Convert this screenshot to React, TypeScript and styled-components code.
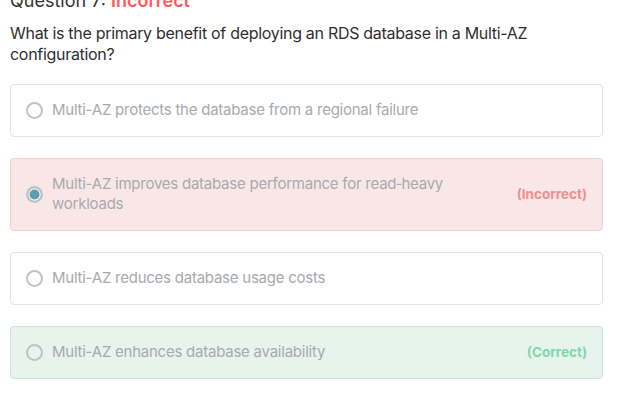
import React from "react";
import styled, { createGlobalStyle } from "styled-components";

type Status = "none" | "incorrect" | "correct";

interface Answer {
  text: string;
  status: Status;
  selected?: boolean;
}

const answers: Answer[] = [
  { text: "Multi-AZ protects the database from a regional failure", status: "none" },
  {
    text: "Multi-AZ improves database performance for read\u2011heavy workloads",
    status: "incorrect",
    selected: true,
  },
  { text: "Multi-AZ reduces database usage costs", status: "none" },
  { text: "Multi-AZ enhances database availability", status: "correct" },
];

const App: React.FC = () => {
  return (
    <>
      <GlobalStyle />
      <Page>
        <Header>
          Question 7: <Verdict>Incorrect</Verdict>
        </Header>
        <QuestionText>
          What is the primary benefit of deploying an RDS database in a Multi-AZ
          configuration?
        </QuestionText>
        <AnswerList>
          {answers.map((a) => (
            <AnswerCard key={a.text} $status={a.status}>
              <Radio $checked={!!a.selected} />
              <AnswerText>{a.text}</AnswerText>
              {a.status !== "none" && (
                <StatusLabel $status={a.status}>
                  {a.status === "correct" ? "(Correct)" : "(Incorrect)"}
                </StatusLabel>
              )}
            </AnswerCard>
          ))}
        </AnswerList>
      </Page>
    </>
  );
};

export default App;

const GlobalStyle = createGlobalStyle`
  body {
    margin: 0;
    background: #fff;
    font-family: Inter, "Noto Sans", sans-serif;
    overflow: hidden;
  }
`;

const Page = styled.div`
  padding: 0 20px 0 10px;
`;

const Header = styled.div`
  font-size: 18px;
  line-height: 22px;
  color: #333;
  margin-top: -10px;
`;

const Verdict = styled.span`
  color: #ff5a5f;
  font-weight: 600;
`;

const QuestionText = styled.p`
  margin: 11px 0 19px;
  font-size: 16px;
  line-height: 21px;
  letter-spacing: -0.3px;
  color: #2f2f2f;
`;

const AnswerList = styled.div`
  display: flex;
  flex-direction: column;
  gap: 21px;
`;

const cardColors: Record<Status, { bg: string; border: string }> = {
  none: { bg: "#ffffff", border: "#e3e3e3" },
  incorrect: { bg: "#f9e7e7", border: "#ecd4d4" },
  correct: { bg: "#e6f4ed", border: "#d0e3d8" },
};

const AnswerCard = styled.div<{ $status: Status }>`
  display: flex;
  align-items: center;
  gap: 9px;
  padding: 15px 15px 16px;
  border: 1px solid ${(p) => cardColors[p.$status].border};
  background: ${(p) => cardColors[p.$status].bg};
  border-radius: 4px;
`;

const Radio = styled.span<{ $checked: boolean }>`
  flex: none;
  box-sizing: border-box;
  width: 17px;
  height: 17px;
  border-radius: 50%;
  border: 2px solid #bfc2c8;
  background: ${(p) => (p.$checked ? "#5f9fad" : "transparent")};
  box-shadow: ${(p) => (p.$checked ? "inset 0 0 0 1.5px #f4f4f5" : "none")};
`;

const AnswerText = styled.span`
  flex: 1;
  font-size: 15px;
  line-height: 20px;
  letter-spacing: -0.24px;
  color: #a8aaae;
  padding-right: 40px;
`;

const StatusLabel = styled.span<{ $status: Status }>`
  flex: none;
  font-size: 13.5px;
  font-weight: 700;
  color: ${(p) => (p.$status === "correct" ? "#82d6ae" : "#f08e8e")};
`;
